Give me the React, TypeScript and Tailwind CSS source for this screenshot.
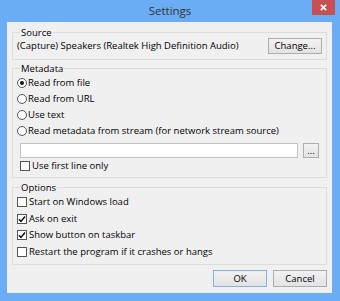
import React from 'react';

const Btn = ({
  children,
  focus = false,
  className = '',
}: {
  children: React.ReactNode;
  focus?: boolean;
  className?: string;
}) => (
  <button
    className={`flex w-[54px] items-center justify-center border bg-linear-to-b from-[#f2f2f2] to-[#e3e3e3] leading-none text-black ${
      focus ? 'border-[#7db4ec]' : 'border-[#adadad]'
    } ${className}`}
  >
    {children}
  </button>
);

const Radio = ({ label, checked = false }: { label: string; checked?: boolean }) => (
  <div className="flex h-[16px] items-center gap-[1px]">
    <span className="flex h-[10px] w-[10px] items-center justify-center rounded-full border border-[#555] bg-white">
      {checked && <span className="h-[4px] w-[4px] rounded-full bg-[#111]" />}
    </span>
    <span>{label}</span>
  </div>
);

const Check = ({
  label,
  checked = false,
  className = '',
}: {
  label: string;
  checked?: boolean;
  className?: string;
}) => (
  <div className={`flex items-center gap-[2px] ${className}`}>
    <span className="flex h-[10px] w-[10px] items-center justify-center border border-[#555] bg-white">
      {checked && (
        <svg viewBox="0 0 8 8" className="h-[8px] w-[8px]">
          <path d="M1 4.3 L3 6.4 L7 1.4" fill="none" stroke="#111" strokeWidth="1.6" />
        </svg>
      )}
    </span>
    <span>{label}</span>
  </div>
);

export default function App() {
  return (
    <div className="flex h-[301px] w-[340px] flex-col bg-[#6aadf4] font-['Open_Sans',sans-serif]">
      {/* title bar */}
      <div className="relative flex h-[22px] items-center justify-center">
        <span className="text-[11.5px] text-[#333]">Settings</span>
        <div className="absolute right-[5px] top-0 flex h-[15px] w-[23px] items-center justify-center bg-[#c75050]">
          <svg viewBox="0 0 8 8" className="h-[7px] w-[7px]">
            <path d="M1 1 L7 7 M7 1 L1 7" stroke="#fff" strokeWidth="1.8" />
          </svg>
        </div>
      </div>

      {/* client area */}
      <div className="ml-[7px] flex h-[271px] w-[325px] flex-col bg-[#f0f0f0] px-[5px] pt-[5px] text-[9.5px] text-black">
        <fieldset className="border border-[#dcdcdc] px-[4px] pb-[5px]">
          <legend className="ml-[3px] px-px leading-[11px]">Source</legend>
          <div className="flex h-[16px] items-center justify-between">
            <span>(Capture) Speakers (Realtek High Definition Audio)</span>
            <Btn className="h-[16px]">Change...</Btn>
          </div>
        </fieldset>

        <fieldset className="mt-[3px] border border-[#dcdcdc] px-[4px] pb-[4px]">
          <legend className="ml-[3px] px-px leading-[11px]">Metadata</legend>
          <div className="pt-px">
            <Radio label="Read from file" checked />
            <Radio label="Read from URL" />
            <Radio label="Use text" />
            <Radio label="Read metadata from stream (for network stream source)" />
          </div>
          <div className="ml-[3px] mr-[3px] mt-[4px] flex h-[15px] gap-[5px]">
            <div className="flex-1 border border-[#c2c2c2] bg-white" />
            <Btn className="w-[16px]! h-[15px]">...</Btn>
          </div>
          <Check label="Use first line only" className="ml-[3px] mt-px h-[14px]" />
        </fieldset>

        <fieldset className="mt-[4px] border border-[#dcdcdc] px-[4px] pb-[4px]">
          <legend className="ml-[3px] px-px leading-[11px]">Options</legend>
          <div className="pt-px">
            <Check label="Start on Windows load" className="h-[16.5px]" />
            <Check label="Ask on exit" checked className="h-[16.5px]" />
            <Check label="Show button on taskbar" checked className="h-[16.5px]" />
            <Check label="Restart the program if it crashes or hangs" className="h-[16.5px]" />
          </div>
        </fieldset>

        <div className="mt-[5px] flex justify-end gap-[6px]">
          <Btn focus className="h-[17px]">OK</Btn>
          <Btn className="h-[17px]">Cancel</Btn>
        </div>
      </div>
    </div>
  );
}
